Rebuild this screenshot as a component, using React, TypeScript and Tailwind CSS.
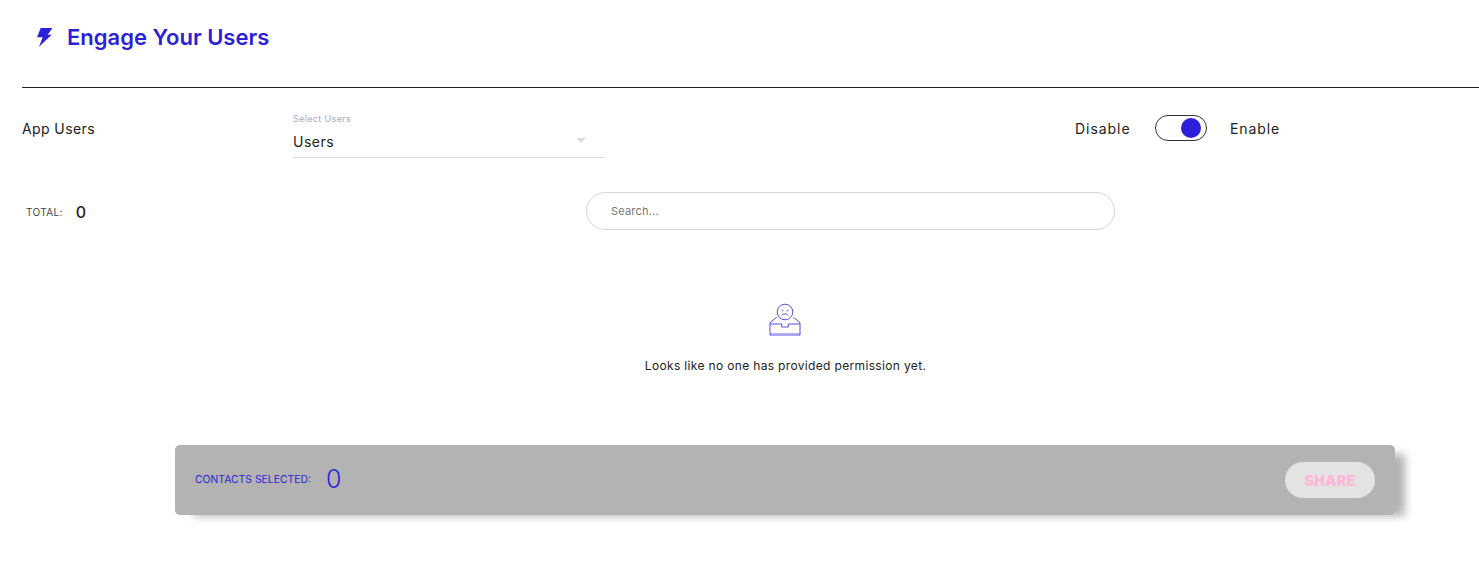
const blue = "text-[#2b1fd8]";

function Bolt() {
  return (
    <svg viewBox="0 0 16 19" className="h-[19px] w-[16px] fill-[#2b1fd8]">
      <path d="M3.7 0H15.3L10.7 6.7H14.7L2 18.7L5.7 9.3H0Z" />
    </svg>
  );
}

function EmptyIcon() {
  return (
    <svg viewBox="1 0 34 34" fill="none" className="h-[34px] w-[34px] stroke-[#3a2fdc]" strokeWidth="0.85">
      <circle cx="17" cy="9" r="7.8" />
      <circle cx="14.4" cy="7.6" r="0.4" />
      <circle cx="19.6" cy="7.6" r="0.4" />
      <path d="M13.8 12.4C15.2 10.4 18.8 10.4 20.2 12.4" />
      <path d="M8.7 14.3L2 19.7V32H32V19.7L25.3 14.3" />
      <path d="M2 21H13.7V24H20.3V21H32" />
      <path d="M2 30.5H32" strokeOpacity="0.45" />
    </svg>
  );
}

export default function App() {
  return (
    <div className="min-h-[577px] bg-white font-['Inter',sans-serif] text-[#222]">
      <div className="flex h-[87px] items-start pt-[28px] pl-[37px]">
        <Bolt />
        <h1 className={`ml-[14px] -mt-[5px] text-[22px] font-semibold leading-[28px] ${blue}`}>Engage Your Users</h1>
      </div>
      <div className="ml-[22px] border-t border-[#222]" />

      <div className="flex h-[70px] pl-[22px]">
        <div className="w-[271px] pt-[32px] text-[14px] leading-[18px] tracking-[0.4px]">App Users</div>
        <div className="w-[312px] pt-[24px]">
          <div className="h-[13px] text-[9px] leading-[13px] text-[#a9a9c4] tracking-[0.35px]">Select Users</div>
          <div className="flex h-[33px] items-center justify-between border-b border-[#ddd] pr-[19px] pt-[7px] pb-[7px] text-[14px] tracking-[0.5px]">
            <span>Users</span>
            <span className="mb-[2px] h-0 w-0 border-x-[5px] border-t-[5px] border-x-transparent border-t-[#ddd]" />
          </div>
        </div>
        <div className="ml-[470px] flex h-[80px] items-center">
          <span className="w-[55px] text-[14px] tracking-[0.95px]">Disable</span>
          <div className="ml-[25px] flex h-[26px] w-[52px] items-center justify-end rounded-full border border-[#333] pr-[5px]">
            <span className="h-[20px] w-[20px] rounded-full bg-[#2b1fd8]" />
          </div>
          <span className="ml-[23px] text-[14px] tracking-[0.9px]">Enable</span>
        </div>
      </div>

      <div className="mt-[34px] flex h-[38px] items-center pl-[26px]">
        <div className="flex w-[560px] items-center pt-[2px]">
          <span className="text-[10px] tracking-[0.35px] text-[#444]">TOTAL:</span>
          <span className="ml-[13px] text-[16px] font-medium">0</span>
        </div>
        <div className="flex h-[38px] w-[529px] items-center rounded-full border border-[#d6d6d6] pl-[24px] text-[11px] tracking-[0.2px] text-[#777]">
          Search...
        </div>
      </div>

      <div className="mt-[73px] flex flex-col items-center pl-[92px]">
        <EmptyIcon />
        <p className="mt-[21px] text-[12px] leading-[16px] tracking-[0.34px]">Looks like no one has provided permission yet.</p>
      </div>

      <div className="ml-[175px] mt-[71px] flex h-[70px] w-[1220px] items-center justify-between rounded-[5px] bg-[#b3b3b3] pl-[20px] pr-[20px] shadow-[14px_5px_8px_-4px_rgba(0,0,0,0.3)]">
        <div className="flex items-center">
          <span className={`text-[10.4px] ${blue}`}>CONTACTS SELECTED:</span>
          <span className={`ml-[15px] text-[25px] font-light ${blue}`}>0</span>
        </div>
        <button className="h-[36px] w-[90px] rounded-full bg-[#e3e3e3] text-[14px] font-black tracking-[0.4px] text-[#ffb6d9]">
          SHARE
        </button>
      </div>
    </div>
  );
}
